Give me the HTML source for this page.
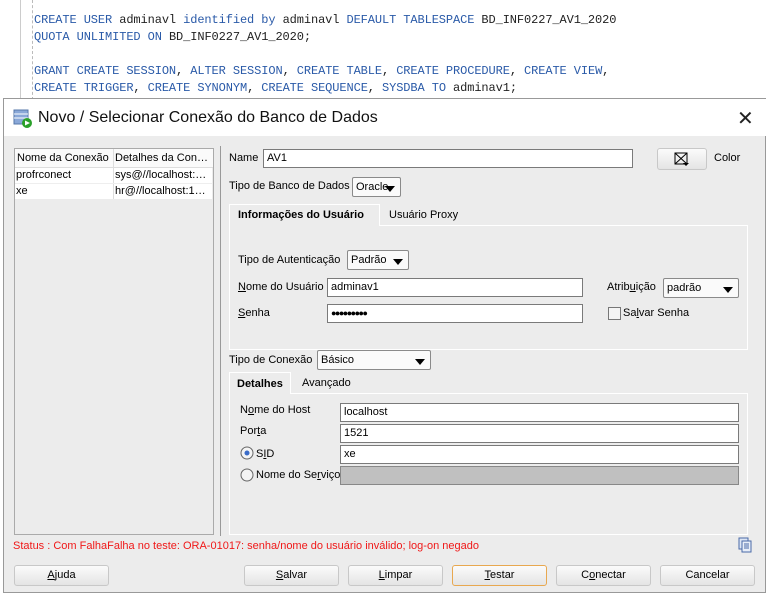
<!DOCTYPE html>
<html><head><meta charset="utf-8"><style>
*{box-sizing:border-box;margin:0;padding:0}
body{width:766px;height:596px;overflow:hidden;background:#fff;font-family:"Liberation Sans",sans-serif;font-size:11px;color:#000;position:relative}
.a{position:absolute;white-space:nowrap}
.code{font-family:"Liberation Mono",monospace;font-size:12px;color:#2a5aa8;letter-spacing:-0.1px}
.code b{font-weight:normal;color:#222}
.inp{position:absolute;background:#fff;border:1px solid #7a7a7a;padding:1px 3px;font-size:11px;line-height:15px}
.sel{position:absolute;background:#fafafa;border:1px solid #8a8a8a;border-radius:2px;padding:3px 3px;font-size:11px}
.sel:after{content:"";position:absolute;right:5px;top:8px;border-left:5px solid transparent;border-right:5px solid transparent;border-top:6px solid #000}
.btn{position:absolute;height:21px;border:1px solid #c8c8c8;border-radius:3px;background:linear-gradient(#fbfbfb,#e4e4e4);text-align:center;line-height:19px;font-size:11px}
u{text-decoration:underline}
</style></head><body>
<div class="a" style="left:20px;top:0;width:1px;height:100px;background:#ccc"></div>
<div class="a" style="left:32px;top:0;height:100px;border-left:1px dashed #bbb"></div>
<div class="a code" style="left:34px;top:13px">CREATE USER <b>adminavl</b> identified by <b>adminavl</b> DEFAULT TABLESPACE <b>BD_INF0227_AV1_2020</b></div>
<div class="a code" style="left:34px;top:30px">QUOTA UNLIMITED ON <b>BD_INF0227_AV1_2020;</b></div>
<div class="a code" style="left:34px;top:64px">GRANT CREATE SESSION<b>,</b> ALTER SESSION<b>,</b> CREATE TABLE<b>,</b> CREATE PROCEDURE<b>,</b> CREATE VIEW<b>,</b></div>
<div class="a code" style="left:34px;top:81px">CREATE TRIGGER<b>,</b> CREATE SYNONYM<b>,</b> CREATE SEQUENCE<b>,</b> SYSDBA TO <b>adminav1;</b></div>

<div class="a" style="left:3px;top:98px;width:763px;height:495px;background:#ececec;border:1px solid #999"></div>
<div class="a" style="left:4px;top:99px;width:762px;height:37px;background:#fff"></div>
<svg class="a" style="left:13px;top:109px" width="20" height="20"><rect x="1" y="1" width="14" height="14" fill="#8aa8d8" stroke="#5577aa"/><line x1="1" y1="5" x2="15" y2="5" stroke="#fff"/><line x1="1" y1="9" x2="15" y2="9" stroke="#fff"/><circle cx="14" cy="14" r="5" fill="#2aa02a"/><path d="M12 11.5 L17 14 L12 16.5Z" fill="#fff"/></svg>
<div class="a" style="left:38px;top:109px;font-size:16px;color:#111">Novo / Selecionar Conexão do Banco de Dados</div>
<div class="a" style="left:737px;top:106px;font-size:20px;font-weight:300;color:#222">✕</div>

<div class="a" style="left:14px;top:148px;width:200px;height:387px;border:1px solid #aaa;background:#ececec"></div>
<div class="a" style="left:15px;top:149px;width:198px;height:19px;background:#fafafa;border-bottom:1px solid #ddd"></div>
<div class="a" style="left:15px;top:168px;width:197px;height:31px;background:#fff"></div>
<div class="a" style="left:113px;top:149px;width:1px;height:50px;background:#ddd"></div>
<div class="a" style="left:15px;top:183px;width:197px;height:1px;background:#eee"></div>
<div class="a" style="left:17px;top:152px">Nome da Conexão</div>
<div class="a" style="left:115px;top:152px">Detalhes da Con…</div>
<div class="a" style="left:16px;top:169px">profrconect</div>
<div class="a" style="left:115px;top:169px">sys@//localhost:…</div>
<div class="a" style="left:16px;top:185px">xe</div>
<div class="a" style="left:115px;top:185px">hr@//localhost:1…</div>
<div class="a" style="left:220px;top:146px;width:1px;height:390px;background:#999"></div>

<div class="a" style="left:229px;top:152px">Name</div>
<div class="inp" style="left:263px;top:149px;width:370px;height:19px">AV1</div>
<div class="btn" style="left:657px;top:148px;width:50px;height:22px"><svg width="16" height="15" style="margin-top:3px"><rect x="1" y="1" width="12" height="11" fill="none" stroke="#000"/><path d="M1 1L13 12M13 1L1 12" stroke="#000"/><path d="M9 11h6l-3 3z" fill="#000"/></svg></div>
<div class="a" style="left:714px;top:152px">Color</div>
<div class="a" style="left:229px;top:180px">Tipo de Banco de Dados</div>
<div class="sel" style="left:352px;top:177px;width:49px;height:20px">Oracle</div>

<div class="a" style="left:229px;top:225px;width:519px;height:125px;border:1px solid #fff"></div>
<div class="a" style="left:229px;top:204px;width:151px;height:22px;background:#ececec;border:1px solid #fff;border-bottom:none;font-weight:bold;padding:4px 0 0 8px">Informações do Usuário</div>
<div class="a" style="left:389px;top:209px">Usuário Proxy</div>
<div class="a" style="left:238px;top:254px">Tipo de Autenticação</div>
<div class="sel" style="left:347px;top:250px;width:62px;height:20px">Padrão</div>
<div class="a" style="left:238px;top:281px"><u>N</u>ome do Usuário</div>
<div class="inp" style="left:327px;top:278px;width:256px;height:19px">adminav1</div>
<div class="a" style="left:607px;top:281px">Atrib<u>u</u>ição</div>
<div class="sel" style="left:663px;top:278px;width:76px;height:20px">padrão</div>
<div class="a" style="left:238px;top:307px"><u>S</u>enha</div>
<div class="inp" style="left:327px;top:304px;width:256px;height:19px;font-size:9px;letter-spacing:-1.5px">●●●●●●●●●</div>
<div class="a" style="left:608px;top:307px;width:13px;height:13px;border:1px solid #777;background:#f4f4f4"></div>
<div class="a" style="left:623px;top:307px">Sa<u>l</u>var Senha</div>

<div class="a" style="left:229px;top:354px">Tipo de Conexão</div>
<div class="sel" style="left:317px;top:350px;width:114px;height:20px">Básico</div>
<div class="a" style="left:229px;top:393px;width:519px;height:142px;border:1px solid #fff"></div>
<div class="a" style="left:229px;top:372px;width:62px;height:22px;background:#ececec;border:1px solid #fff;border-bottom:none;font-weight:bold;padding:5px 0 0 7px">Detalhes</div>
<div class="a" style="left:302px;top:377px">Avançado</div>
<div class="a" style="left:240px;top:404px">N<u>o</u>me do Host</div>
<div class="inp" style="left:340px;top:403px;width:399px;height:19px">localhost</div>
<div class="a" style="left:240px;top:425px">Por<u>t</u>a</div>
<div class="inp" style="left:340px;top:424px;width:399px;height:19px">1521</div>
<svg class="a" style="left:240px;top:446px" width="14" height="14"><circle cx="7" cy="7" r="6" fill="#f4f4f4" stroke="#666"/><circle cx="7" cy="7" r="2.5" fill="#3a6cc8"/></svg>
<div class="a" style="left:256px;top:448px">S<u>I</u>D</div>
<div class="inp" style="left:340px;top:445px;width:399px;height:19px">xe</div>
<svg class="a" style="left:240px;top:468px" width="14" height="14"><circle cx="7" cy="7" r="6" fill="#f4f4f4" stroke="#666"/></svg>
<div class="a" style="left:256px;top:469px">Nome do Se<u>r</u>viço</div>
<div class="inp" style="left:340px;top:466px;width:399px;height:19px;background:#c0c0c0;border-color:#888"></div>

<div class="a" style="left:13px;top:540px;color:#f01818">Status : Com FalhaFalha no teste: ORA-01017: senha/nome do usuário inválido; log-on negado</div>
<svg class="a" style="left:738px;top:537px" width="15" height="16"><rect x="1" y="1" width="9" height="11" fill="#dde6f5" stroke="#4a6aa8"/><rect x="4" y="4" width="9" height="11" fill="#e8eef8" stroke="#4a6aa8"/><path d="M6 7h5M6 9h5M6 11h5" stroke="#4a6aa8"/></svg>

<div class="btn" style="left:14px;top:565px;width:95px"><u>A</u>juda</div>
<div class="btn" style="left:244px;top:565px;width:95px"><u>S</u>alvar</div>
<div class="btn" style="left:348px;top:565px;width:95px"><u>L</u>impar</div>
<div class="btn" style="left:452px;top:565px;width:95px;border-color:#e8a850"><u>T</u>estar</div>
<div class="btn" style="left:556px;top:565px;width:95px">C<u>o</u>nectar</div>
<div class="btn" style="left:660px;top:565px;width:95px">Cancelar</div>
</body></html>
